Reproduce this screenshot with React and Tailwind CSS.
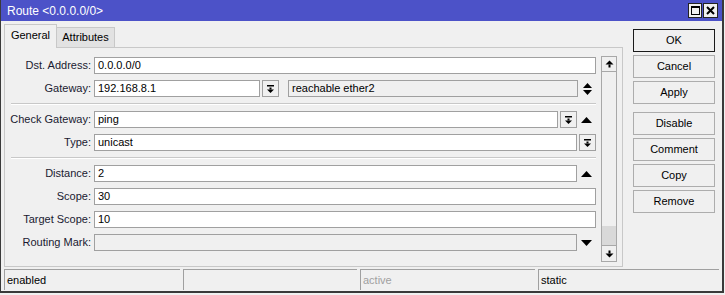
import React from "react";

const font = { fontFamily: '"Liberation Sans", Arial, sans-serif' };

function DropIcon() {
  return (
    <svg width="9" height="10" viewBox="0 0 9 10">
      <rect x="1" y="1" width="7" height="1.5" fill="#000" />
      <rect x="3.5" y="3.5" width="2" height="2" fill="#000" />
      <polygon points="1,5.5 8,5.5 4.5,9" fill="#000" />
    </svg>
  );
}

function Up() {
  return (
    <svg width="11" height="6" viewBox="0 0 11 6">
      <polygon points="0,6 11,6 5.5,0" fill="#000" />
    </svg>
  );
}

function Down() {
  return (
    <svg width="11" height="6" viewBox="0 0 11 6">
      <polygon points="0,0 11,0 5.5,6" fill="#000" />
    </svg>
  );
}

function UpDown() {
  return (
    <svg width="9" height="12" viewBox="0 0 9 12">
      <polygon points="0,5 9,5 4.5,0" fill="#000" />
      <polygon points="0,7 9,7 4.5,12" fill="#000" />
    </svg>
  );
}

function Input({ value, className = "", disabled }) {
  return (
    <div
      className={
        "h-[17px] border border-[#a0a0a0] px-[3px] flex items-center text-[11px] leading-none " +
        (disabled ? "bg-[#f0f0f0] " : "bg-white ") +
        className
      }
    >
      {value}
    </div>
  );
}

function DropBtn() {
  return (
    <div className="h-[17px] w-[17px] ml-[2px] border border-[#a0a0a0] bg-[#f0f0f0] flex items-center justify-center">
      <DropIcon />
    </div>
  );
}

function Row({ label, children }) {
  return (
    <div className="flex items-center h-[17px] mb-[6px]">
      <div className="w-[89px] pr-[3px] text-right text-[11px] text-[#1a1a30] whitespace-nowrap">
        {label}
      </div>
      <div className="flex-1 flex items-center">{children}</div>
    </div>
  );
}

function Sep() {
  return <div className="ml-[6px] h-[2px] border-t border-[#c8c8c8] border-b border-b-white mb-[6px]" />;
}

function Btn({ label, focus }) {
  return (
    <div
      className={
        "h-[23px] w-[82px] flex items-center justify-center text-[11px] bg-[#f0f0f0] " +
        (focus ? "border border-[#1a1a1a]" : "border border-[#adadad]")
      }
    >
      {label}
    </div>
  );
}

export default function App() {
  return (
    <div className="w-[725px] h-[295px] bg-[#f0f0f0] text-black" style={font}>
      <div className="w-[724px] h-[293px] border-l border-r-2 border-b-2 border-[#3a3a3a] flex flex-col">
        <div className="h-[21px] bg-[#4c52c8] flex items-center justify-between pl-[6px] pr-[4px]">
          <span className="text-white text-[12px]">Route &lt;0.0.0.0/0&gt;</span>
          <div className="flex gap-[1px]">
            <div className="w-[14px] h-[15px] bg-[#f0f0f0] border border-[#222] flex items-center justify-center">
              <div className="w-[9px] h-[9px] border border-black border-t-2" />
            </div>
            <div className="w-[15px] h-[15px] bg-[#f0f0f0] border border-[#222] flex items-center justify-center">
              <svg width="9" height="9" viewBox="0 0 9 9">
                <path d="M1 1 L8 8 M8 1 L1 8" stroke="#000" strokeWidth="2" />
              </svg>
            </div>
          </div>
        </div>

        <div className="flex flex-1 pl-[3px] pt-[3px]">
          <div className="w-[619px] flex flex-col">
            <div className="flex items-end h-[23px] relative z-10">
              <div className="h-[24px] w-[53px] mb-[-1px] bg-[#f0f0f0] border border-b-0 border-[#c8c8c8] flex items-center justify-center text-[11px] pb-[2px]">
                General
              </div>
              <div className="h-[20px] w-[58px] bg-[#e2e2e2] border border-l-0 border-b-0 border-[#c8c8c8] flex items-center justify-center text-[11px]">
                Attributes
              </div>
            </div>
            <div className="h-[220px] border border-[#c8c8c8] flex pt-[8px] pr-[5px]">
              <div className="flex-1 pt-[1px] mr-[5px]">
                <Row label="Dst. Address:">
                  <Input value="0.0.0.0/0" className="flex-1" />
                </Row>
                <Row label="Gateway:">
                  <Input value="192.168.8.1" className="w-[166px]" />
                  <DropBtn />
                  <Input value="reachable ether2" disabled className="ml-[9px] flex-1" />
                  <div className="w-[18px] flex justify-center">
                    <UpDown />
                  </div>
                </Row>
                <Sep />
                <Row label="Check Gateway:">
                  <Input value="ping" className="flex-1" />
                  <DropBtn />
                  <div className="w-[19px] flex justify-center">
                    <Up />
                  </div>
                </Row>
                <Row label="Type:">
                  <Input value="unicast" className="flex-1" />
                  <DropBtn />
                </Row>
                <Sep />
                <Row label="Distance:">
                  <Input value="2" className="flex-1" />
                  <div className="w-[19px] flex justify-center">
                    <Up />
                  </div>
                </Row>
                <Row label="Scope:">
                  <Input value="30" className="flex-1" />
                </Row>
                <Row label="Target Scope:">
                  <Input value="10" className="flex-1" />
                </Row>
                <Row label="Routing Mark:">
                  <Input value="" disabled className="flex-1" />
                  <div className="w-[19px] flex justify-center">
                    <Down />
                  </div>
                </Row>
              </div>
              <div className="w-[16px] h-[206px] border border-[#a8a8a8] flex flex-col bg-[#f0f0f0]">
                <div className="h-[15px] border-b border-[#a8a8a8] flex items-center justify-center">
                  <svg width="9" height="8" viewBox="0 0 9 8">
                    <polygon points="0.5,4.5 8.5,4.5 4.5,0.5" fill="#000" />
                    <rect x="3.5" y="4.5" width="2" height="3" fill="#000" />
                  </svg>
                </div>
                <div className="flex-1" />
                <div className="h-[19px] bg-[#d9d9d9]" />
                <div className="h-[16px] border-t border-[#a8a8a8] flex items-center justify-center">
                  <svg width="9" height="8" viewBox="0 0 9 8">
                    <rect x="3.5" y="0.5" width="2" height="3" fill="#000" />
                    <polygon points="0.5,3.5 8.5,3.5 4.5,7.5" fill="#000" />
                  </svg>
                </div>
              </div>
            </div>
          </div>

          <div className="ml-[10px] pt-[5px] flex flex-col">
            <div className="flex flex-col gap-[3px]">
              <Btn label="OK" focus />
              <Btn label="Cancel" />
              <Btn label="Apply" />
            </div>
            <div className="flex flex-col gap-[3px] mt-[8px]">
              <Btn label="Disable" />
              <Btn label="Comment" />
              <Btn label="Copy" />
              <Btn label="Remove" />
            </div>
          </div>
        </div>

        <div className="h-[22px] flex gap-[3px] pl-[3px] pr-[3px] pb-[1px] text-[11px]">
          <div className="w-[176px] border-t border-l border-[#a0a0a0] flex items-center pl-[2px]">enabled</div>
          <div className="w-[174px] border-t border-l border-[#a0a0a0]" />
          <div className="w-[175px] border-t border-l border-[#a0a0a0] flex items-center pl-[2px] text-[#a0a0a0]">active</div>
          <div className="flex-1 border-t border-l border-[#a0a0a0] flex items-center pl-[2px]">static</div>
        </div>
      </div>
    </div>
  );
}
